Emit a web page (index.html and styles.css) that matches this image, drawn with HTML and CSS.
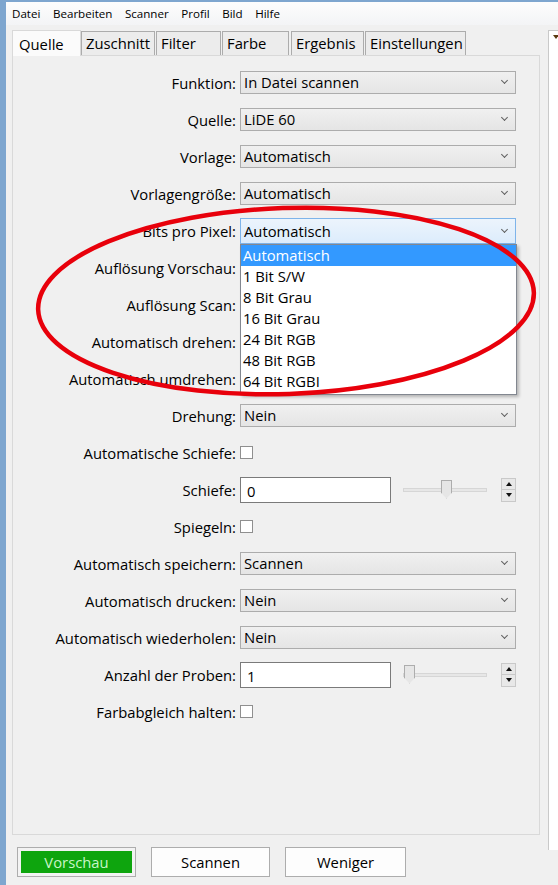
FILE: index.html
```html
<!DOCTYPE html>
<html lang="de">
<head>
    <meta charset="UTF-8">
    <meta name="viewport" content="width=device-width, initial-scale=1.0">
    <title>Scanner</title>
    <link rel="stylesheet" href="styles.css">
</head>
<body>
    <div class="window">
        <div class="menubar">
            <span>Datei</span>
            <span>Bearbeiten</span>
            <span>Scanner</span>
            <span>Profil</span>
            <span>Bild</span>
            <span>Hilfe</span>
        </div>

        <div class="main">
            <div class="left">
                <div class="tabs">
                    <div class="tab active">Quelle</div>
                    <div class="tab">Zuschnitt</div>
                    <div class="tab">Filter</div>
                    <div class="tab">Farbe</div>
                    <div class="tab">Ergebnis</div>
                    <div class="tab">Einstellungen</div>
                </div>

                <div class="panel">
                    <div class="row">
                        <label>Funktion:</label>
                        <div class="combo">In Datei scannen</div>
                    </div>
                    <div class="row">
                        <label>Quelle:</label>
                        <div class="combo">LiDE 60</div>
                    </div>
                    <div class="row">
                        <label>Vorlage:</label>
                        <div class="combo">Automatisch</div>
                    </div>
                    <div class="row">
                        <label>Vorlagengröße:</label>
                        <div class="combo">Automatisch</div>
                    </div>
                    <div class="row">
                        <label>Bits pro Pixel:</label>
                        <div class="combo-wrap">
                            <div class="combo focused">Automatisch</div>
                            <ul class="dropdown">
                                <li class="selected">Automatisch</li>
                                <li>1 Bit S/W</li>
                                <li>8 Bit Grau</li>
                                <li>16 Bit Grau</li>
                                <li>24 Bit RGB</li>
                                <li>48 Bit RGB</li>
                                <li>64 Bit RGBI</li>
                            </ul>
                        </div>
                    </div>
                    <!-- these combos sit under the open list -->
                    <div class="row">
                        <label>Auflösung Vorschau:</label>
                        <div class="combo"></div>
                    </div>
                    <div class="row">
                        <label>Auflösung Scan:</label>
                        <div class="combo"></div>
                    </div>
                    <div class="row">
                        <label>Automatisch drehen:</label>
                        <div class="combo"></div>
                    </div>
                    <div class="row">
                        <label>Automatisch umdrehen:</label>
                        <div class="combo"></div>
                    </div>
                    <div class="row">
                        <label>Drehung:</label>
                        <div class="combo">Nein</div>
                    </div>
                    <div class="row">
                        <label>Automatische Schiefe:</label>
                        <span class="check"></span>
                    </div>
                    <div class="row">
                        <label>Schiefe:</label>
                        <div class="numeric">
                            <div class="text-input">0</div>
                            <div class="slider"><span class="thumb thumb-mid"></span></div>
                            <div class="spin"><span class="up"></span><span class="down"></span></div>
                        </div>
                    </div>
                    <div class="row">
                        <label>Spiegeln:</label>
                        <span class="check"></span>
                    </div>
                    <div class="row">
                        <label>Automatisch speichern:</label>
                        <div class="combo">Scannen</div>
                    </div>
                    <div class="row">
                        <label>Automatisch drucken:</label>
                        <div class="combo">Nein</div>
                    </div>
                    <div class="row">
                        <label>Automatisch wiederholen:</label>
                        <div class="combo">Nein</div>
                    </div>
                    <div class="row">
                        <label>Anzahl der Proben:</label>
                        <div class="numeric">
                            <div class="text-input">1</div>
                            <div class="slider"><span class="thumb thumb-start"></span></div>
                            <div class="spin"><span class="up"></span><span class="down"></span></div>
                        </div>
                    </div>
                    <div class="row">
                        <label>Farbabgleich halten:</label>
                        <span class="check"></span>
                    </div>
                </div>

                <div class="buttons">
                    <button class="btn btn-preview">Vorschau</button>
                    <button class="btn">Scannen</button>
                    <button class="btn">Weniger</button>
                </div>
            </div>

            <div class="side">
                <span class="side-arrow"></span>
            </div>
        </div>
    </div>

    <!-- red marker drawn around the bit depth list -->
    <svg class="marker" width="558" height="885" viewBox="0 0 558 885">
        <ellipse cx="286" cy="301" rx="248" ry="93" transform="rotate(-2 286 301)"
                 fill="none" stroke="#e8000b" stroke-width="4.5"/>
    </svg>
</body>
</html>
```

FILE: styles.css
```css
* {
    box-sizing: border-box;
}

body {
    margin: 0;
    width: 558px;
    height: 885px;
    overflow: hidden;
    background: #f0f0f0;
    font-family: "Open Sans", "Noto Sans", sans-serif;
    color: #000;
}

.window {
    height: 885px;
    border-left: 6px solid #7ea6cf;
    border-top: 2px solid #7ea6cf;
    display: flex;
    flex-direction: column;
}

.menubar {
    height: 23px;
    display: flex;
    align-items: center;
    gap: 12.5px;
    padding-left: 6px;
    font-size: 11.6px;
    background: linear-gradient(#fdfdfd, #f3f4f6);
}

.main {
    flex: 1;
    display: flex;
    padding-top: 4px;
}

.left {
    width: 542px;
    padding-left: 6px;
}

.tabs {
    display: flex;
    height: 26px;
    align-items: flex-end;
    font-size: 14.8px;
}

.tab {
    height: 24px;
    padding: 0 4px;
    margin-right: 1px;
    border: 1px solid #acacac;
    border-bottom: none;
    background: #ececec;
    line-height: 22px;
}

.tab.active {
    width: 69px;
    height: 26px;
    padding: 0 6px;
    margin-right: 0;
    background: #fbfbfb;
    border-color: #d9d9d9;
    line-height: 26px;
    position: relative;
    top: 1px;
    z-index: 1;
}

.tab:nth-child(2) { width: 74px; }
.tab:nth-child(3) { width: 65px; }
.tab:nth-child(4) { width: 67px; }
.tab:nth-child(5) { width: 73px; margin-left: 1px; }
.tab:nth-child(6) { width: 101px; }

.panel {
    height: 780px;
    width: 528px;
    border: 1px solid #d9d9d9;
    padding-top: 8px;
    font-size: 14.8px;
}

.row {
    height: 37px;
    display: grid;
    grid-template-columns: 223px 276px;
    column-gap: 4px;
    align-items: center;
}

.row label {
    text-align: right;
    white-space: nowrap;
}

.combo-wrap {
    position: relative;
}

.combo {
    height: 23px;
    border: 1px solid #acacac;
    background: linear-gradient(#f0f0f0, #e5e5e5);
    padding-left: 3px;
    line-height: 21px;
    position: relative;
}

.combo::after {
    content: "";
    position: absolute;
    right: 8px;
    top: 6px;
    width: 4px;
    height: 4px;
    border-right: 1.5px solid #606060;
    border-bottom: 1.5px solid #606060;
    transform: rotate(45deg);
}

.combo.focused {
    height: 26px;
    line-height: 24px;
    border-color: #7eb4ea;
    background: linear-gradient(#ecf4fc, #dcecfc);
}

.combo.focused::after {
    top: 8px;
}

.dropdown {
    position: absolute;
    left: 0;
    top: 26px;
    width: 277px;
    margin: 0;
    padding: 0 0 2px;
    list-style: none;
    background: #fff;
    border: 1px solid #828790;
    box-shadow: 2px 2px 3px rgba(0, 0, 0, 0.25);
    z-index: 5;
}

.dropdown li {
    height: 21px;
    line-height: 21px;
    padding-left: 2px;
}

.dropdown li.selected {
    background: #3399ff;
    color: #fff;
}

.check {
    width: 13px;
    height: 13px;
    border: 1px solid #8f8f8f;
    background: #fff;
}

.numeric {
    display: flex;
    align-items: center;
}

.text-input {
    width: 151px;
    height: 26px;
    border: 1px solid #7a7a7a;
    background: #fff;
    padding-left: 6px;
    line-height: 26px;
}

.slider {
    width: 84px;
    height: 4px;
    margin-left: 12px;
    border: 1px solid #d6d6d6;
    background: #e7e7e7;
    position: relative;
}

.thumb {
    position: absolute;
    top: -9px;
    width: 11px;
    height: 19px;
    background: #e6e6e6;
    border: 1px solid #adadad;
    clip-path: polygon(0 0, 100% 0, 100% 70%, 50% 100%, 0 70%);
}

.thumb-mid { left: 37px; }
.thumb-start { left: 0; }

.spin {
    width: 15px;
    height: 24px;
    margin-left: 14px;
    display: flex;
    flex-direction: column;
    border: 1px solid #c9c9c9;
    background: #e8e8e8;
}

.spin span {
    flex: 1;
    position: relative;
}

.spin .up {
    border-bottom: 1px solid #c9c9c9;
}

.spin span::after {
    content: "";
    position: absolute;
    left: 4px;
    top: 3px;
    border-left: 3px solid transparent;
    border-right: 3px solid transparent;
}

.spin .up::after {
    border-bottom: 4px solid #111;
}

.spin .down::after {
    border-top: 4px solid #111;
}

.buttons {
    display: flex;
    gap: 15px;
    padding: 12px 0 0 5px;
}

.btn {
    width: 119px;
    height: 30px;
    border: 1px solid #adadad;
    background: #fdfdfd;
    font-family: inherit;
    font-size: 14.8px;
    padding: 0;
}

.btn:nth-child(3) {
    width: 121px;
}

.btn-preview {
    background: #0ea50e;
    color: #c8f5c8;
    box-shadow: inset 0 0 0 3px #f3f3f3;
}

.side {
    flex: 1;
    margin-top: 1px;
    height: 820px;
    border-left: 1px solid #c9c9c9;
    border-top: 1px solid #c9c9c9;
    background: #fff;
    position: relative;
}

.side-arrow {
    position: absolute;
    left: 4px;
    top: 4px;
    border-left: 3px solid transparent;
    border-right: 3px solid transparent;
    border-top: 4px solid #5a3a10;
}

.marker {
    position: absolute;
    left: 0;
    top: 0;
    pointer-events: none;
    z-index: 10;
}
```
